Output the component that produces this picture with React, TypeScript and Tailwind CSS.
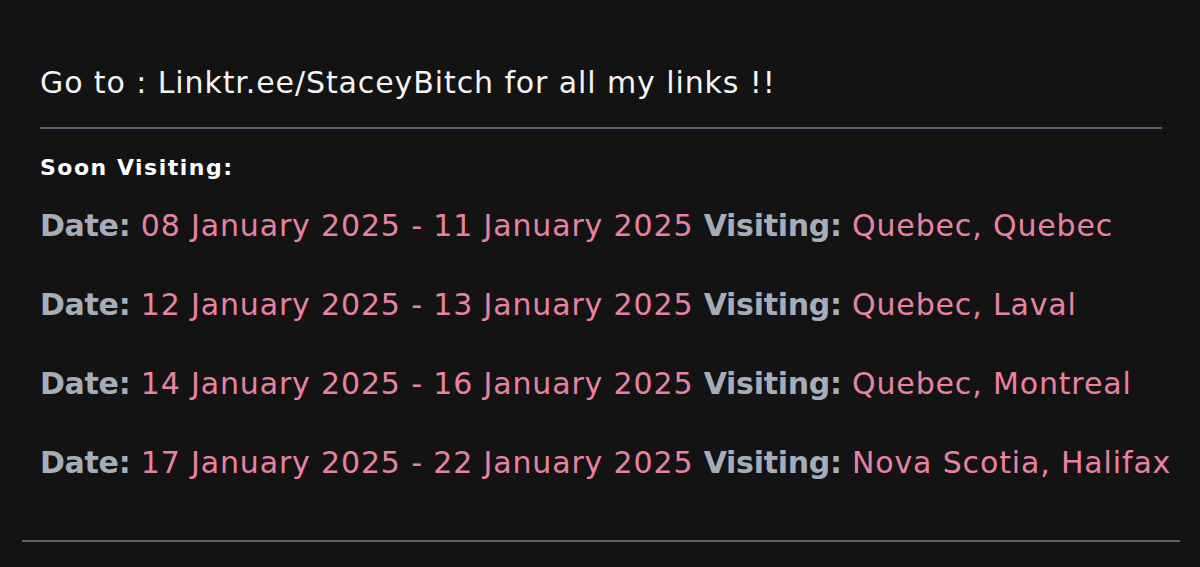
import React from "react";

const rows = [
  ["08 January 2025 - 11 January 2025", "Quebec, Quebec"],
  ["12 January 2025 - 13 January 2025", "Quebec, Laval"],
  ["14 January 2025 - 16 January 2025", "Quebec, Montreal"],
  ["17 January 2025 - 22 January 2025", "Nova Scotia, Halifax"],
];

export default function App() {
  return (
    <div
      className="w-[1200px] h-[567px] bg-[#131314] overflow-hidden pt-[62px] px-[22px]"
      style={{ fontFamily: '"DejaVu Sans", sans-serif' }}
    >
      <div className="px-[18px]">
        <div className="text-[30px] leading-[42px] text-[#f4f4f5] tracking-[0.9px] whitespace-nowrap">
          Go to : Linktr.ee/StaceyBitch for all my links !!
        </div>
        <div className="mt-[23px] h-[2px] bg-[#5e6070] w-[1122px]" />
        <div className="mt-[24px] text-[22px] leading-[30px] font-bold text-white tracking-[1.5px]">Soon Visiting:</div>
        <div className="mt-[22px] flex flex-col gap-[37px]">
          {rows.map(([d, v]) => (
            <div key={d} className="text-[30px] leading-[42px] whitespace-nowrap tracking-[0.85px]">
              <span className="font-bold text-[#a6adba] tracking-[-0.3px]">Date:</span>{" "}
              <span className="text-[#e882a3]">{d}</span>{" "}
              <span className="font-bold text-[#a6adba] tracking-[-0.3px]">Visiting:</span>{" "}
              <span className="text-[#e882a3]">{v}</span>
            </div>
          ))}
        </div>
      </div>
      <div className="mt-[56px] h-[2px] bg-[#5e6070] w-[1158px]" />
    </div>
  );
}
